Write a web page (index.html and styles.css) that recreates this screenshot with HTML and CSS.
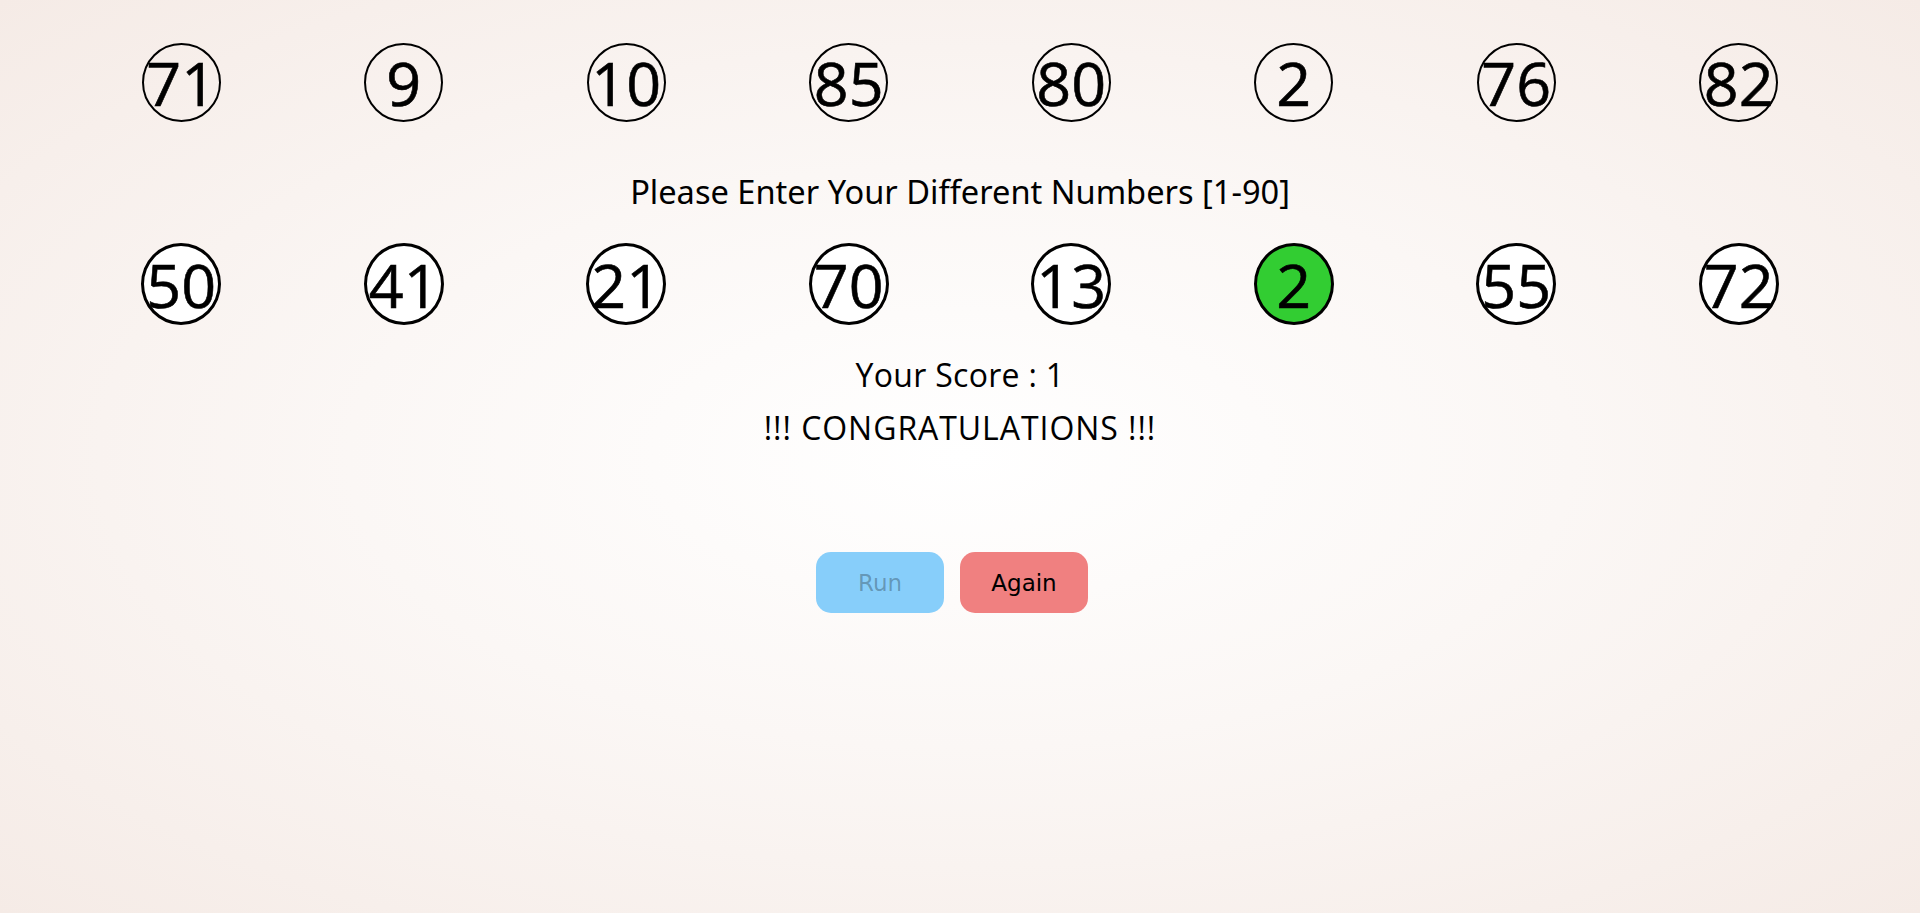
FILE: index.html
```html
<!DOCTYPE html>
<html lang="en">
<head>
<meta charset="utf-8">
<title>Lotto</title>
<link rel="stylesheet" href="styles.css">
</head>
<body>
<main class="page">
  <div class="row row-drawn">
    <div class="ball">71</div>
    <div class="ball">9</div>
    <div class="ball">10</div>
    <div class="ball">85</div>
    <div class="ball">80</div>
    <div class="ball">2</div>
    <div class="ball">76</div>
    <div class="ball">82</div>
  </div>
  <p class="prompt">Please Enter Your Different Numbers [1-90]</p>
  <div class="row row-user">
    <div class="ball ball-user">50</div>
    <div class="ball ball-user">41</div>
    <div class="ball ball-user">21</div>
    <div class="ball ball-user">70</div>
    <div class="ball ball-user">13</div>
    <div class="ball ball-user ball-hit">2</div>
    <div class="ball ball-user">55</div>
    <div class="ball ball-user">72</div>
  </div>
  <p class="score">Your Score : 1</p>
  <p class="message">!!! CONGRATULATIONS !!!</p>
  <div class="actions">
    <button class="btn btn-run" disabled>Run</button>
    <button class="btn btn-again">Again</button>
  </div>
</main>
</body>
</html>
```

FILE: styles.css
```css
html, body {
  margin: 0;
  padding: 0;
  height: 100%;
}

body {
  background: radial-gradient(ellipse at center, #ffffff 0%, #fbf7f5 45%, #f5ebe6 100%);
  color: #000;
  font-family: "Open Sans", "Liberation Sans", sans-serif;
}

.page {
  padding-top: 43px;
}

.row {
  display: grid;
  grid-template-columns: repeat(8, 1fr);
  padding: 0 70px;
  justify-items: center;
}

.ball {
  box-sizing: border-box;
  width: 79px;
  height: 79px;
  border: 2px solid #000;
  border-radius: 50%;
  display: flex;
  align-items: center;
  justify-content: center;
  font-family: "Open Sans", sans-serif;
  font-size: 61px;
  line-height: 1;
  white-space: nowrap;
  -webkit-text-stroke: 0.6px #000;
}

.ball-user {
  width: 80px;
  height: 82px;
  border-width: 3px;
  background: #fff;
}

.ball-hit {
  background: #32cd32;
}

.prompt {
  margin: 50px 0 0;
  text-align: center;
  font-family: "Noto Sans", "Open Sans", sans-serif;
  font-size: 32.6px;
  line-height: 40px;
}

.row-user {
  margin-top: 31px;
}

.score,
.message {
  margin: 0;
  text-align: center;
  font-size: 32px;
  line-height: 40px;
}

.score {
  margin-top: 30px;
  letter-spacing: 0.3px;
}

.message {
  margin-top: 13px;
  letter-spacing: 0.95px;
}

.actions {
  display: flex;
  justify-content: center;
  gap: 16px;
  margin-top: 104px;
  padding-right: 16px;
}

.btn {
  width: 128px;
  height: 61px;
  border: none;
  border-radius: 15px;
  font-family: "DejaVu Sans", sans-serif;
  font-size: 23px;
  color: #000;
  cursor: pointer;
}

.btn-run {
  background: #87cefa;
  color: rgba(16, 16, 16, 0.3);
}

.btn-again {
  background: #f08080;
}
```
